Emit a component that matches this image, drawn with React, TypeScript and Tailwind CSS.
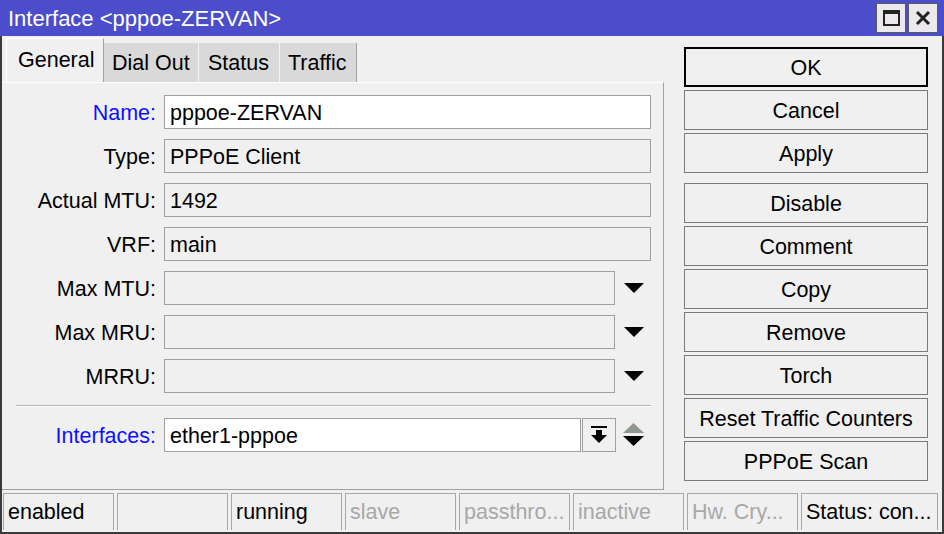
import React from "react";

const font = { fontFamily: '"Liberation Sans", Arial, sans-serif' };

function Field({ value, white, width }: { value: string; white?: boolean; width: string }) {
  return (
    <div
      className={`h-[34px] ${width} border border-[#a0a0a0] ${white ? "bg-white" : "bg-[#f0f0f0]"} flex items-center pl-[5px] pt-[3px] text-black`}
    >
      {value}
    </div>
  );
}

function DownTri() {
  return (
    <svg width="20" height="10" viewBox="0 0 20 10" className="ml-[9px]">
      <polygon points="0,0 20,0 10,10" fill="#000" />
    </svg>
  );
}

function Row({ label, blue, children }: { label: string; blue?: boolean; children: React.ReactNode }) {
  return (
    <div className="flex items-center h-[34px]">
      <div className={`w-[154px] pt-[3px] text-right whitespace-nowrap ${blue ? "text-[#1010ff]" : "text-black"}`}>{label}</div>
      <div className="ml-[8px] flex items-center">{children}</div>
    </div>
  );
}

function Btn({ label, primary }: { label: string; primary?: boolean }) {
  return (
    <div
      className={`h-[40px] flex items-center justify-center pt-[3px] bg-[#f0f0f0] text-black ${
        primary ? "border-2 border-black" : "border border-[#7a7a7a]"
      }`}
    >
      {label}
    </div>
  );
}

function Cell({ text, w, dim }: { text: string; w: string; dim?: boolean }) {
  return (
    <div
      className={`${w} h-[37px] border border-b-0 border-[#a8a8a8] pl-[4px] pt-[2px] flex items-center whitespace-nowrap overflow-hidden ${
        dim ? "text-[#a8a8a8]" : "text-black"
      }`}
    >
      {text}
    </div>
  );
}

export default function App() {
  return (
    <div className="w-[944px] h-[534px] bg-[#f0f0f0] text-[21.5px] leading-none select-none" style={font}>
      {/* title bar */}
      <div className="h-[36px] bg-[#4b4dcb] flex items-center justify-between pl-[8px] pr-[6px]">
        <span className="text-white text-[22px] pt-[2px]">Interface &lt;pppoe-ZERVAN&gt;</span>
        <div className="flex gap-[2px]">
          <div className="w-[30px] h-[30px] bg-[#ece9ec] border border-[#5a5a5a] flex items-center justify-center">
            <svg width="17" height="16" viewBox="0 0 17 16">
              <rect x="1" y="1" width="15" height="14" fill="none" stroke="#222" strokeWidth="2" />
              <rect x="1" y="1" width="15" height="3" fill="#222" />
            </svg>
          </div>
          <div className="w-[30px] h-[30px] bg-[#ece9ec] border border-[#5a5a5a] flex items-center justify-center">
            <svg width="16" height="16" viewBox="0 0 16 16">
              <path d="M2 2 L14 14 M14 2 L2 14" stroke="#222" strokeWidth="3" />
            </svg>
          </div>
        </div>
      </div>

      <div className="h-[498px] border-x-2 border-b-2 border-[#3a3a3a] flex flex-col">
        <div className="h-[454px] flex">
          {/* left column */}
          <div className="w-[662px] flex flex-col">
            <div className="h-[46px] flex items-end pl-[4px]">
              <div className="h-[44px] w-[98px] border-t border-l border-white border-r border-r-[#a0a0a0] bg-[#f0f0f0] flex items-center pl-[11px] pt-[1px]">
                General
              </div>
              <div className="h-[39px] w-[95px] bg-[#d9d9d9] border-r border-[#f4f4f4] flex items-center pl-[8px] pt-[3px]">Dial Out</div>
              <div className="h-[39px] w-[81px] bg-[#d9d9d9] border-r border-[#f4f4f4] flex items-center pl-[9px] pt-[3px]">Status</div>
              <div className="h-[39px] w-[77px] bg-[#d9d9d9] border-r border-[#a0a0a0] flex items-center pl-[8px] pt-[3px]">Traffic</div>
            </div>
            <div className="h-[408px] border-t border-t-white border-r border-b border-[#a0a0a0] pt-[12px] flex flex-col">
              <div className="flex flex-col gap-[10px]">
                <Row label="Name:" blue>
                  <Field value="pppoe-ZERVAN" white width="w-[487px]" />
                </Row>
                <Row label="Type:">
                  <Field value="PPPoE Client" width="w-[487px]" />
                </Row>
                <Row label="Actual MTU:">
                  <Field value="1492" width="w-[487px]" />
                </Row>
                <Row label="VRF:">
                  <Field value="main" width="w-[487px]" />
                </Row>
                <Row label="Max MTU:">
                  <Field value="" width="w-[451px]" />
                  <DownTri />
                </Row>
                <Row label="Max MRU:">
                  <Field value="" width="w-[451px]" />
                  <DownTri />
                </Row>
                <Row label="MRRU:">
                  <Field value="" width="w-[451px]" />
                  <DownTri />
                </Row>
              </div>
              <div className="mt-[12px] ml-[14px] w-[635px] border-t border-[#b4b4b4] border-b border-b-white" />
              <div className="mt-[11px]">
                <Row label="Interfaces:" blue>
                  <Field value="ether1-pppoe" white width="w-[417px]" />
                  <div className="ml-[1px] w-[34px] h-[34px] border border-[#a0a0a0] bg-[#f0f0f0] flex items-center justify-center">
                    <svg width="16" height="18" viewBox="0 0 16 18">
                      <rect x="0" y="0" width="16" height="2" fill="#000" />
                      <rect x="5" y="4" width="6" height="6" fill="#000" />
                      <polygon points="0,9 16,9 8,17" fill="#000" />
                    </svg>
                  </div>
                  <svg width="21" height="24" viewBox="0 0 21 24" className="ml-[7px]">
                    <polygon points="0,10 21,10 10.5,0" fill="#8e988e" />
                    <polygon points="0,13 21,13 10.5,23" fill="#000" />
                  </svg>
                </Row>
              </div>
            </div>
          </div>

          {/* right column */}
          <div className="ml-[20px] w-[244px] pt-[11px] flex flex-col gap-[3px]">
            <Btn label="OK" primary />
            <Btn label="Cancel" />
            <Btn label="Apply" />
            <div className="h-[4px]" />
            <Btn label="Disable" />
            <Btn label="Comment" />
            <Btn label="Copy" />
            <Btn label="Remove" />
            <Btn label="Torch" />
            <Btn label="Reset Traffic Counters" />
            <Btn label="PPPoE Scan" />
          </div>
        </div>

        {/* status bar */}
        <div className="h-[42px] pt-[3px] pl-[1px] flex gap-[3px]">
          <Cell text="enabled" w="w-[111px]" />
          <Cell text="" w="w-[111px]" />
          <Cell text="running" w="w-[111px]" />
          <Cell text="slave" w="w-[111px]" dim />
          <Cell text="passthro..." w="w-[111px]" dim />
          <Cell text="inactive" w="w-[111px]" dim />
          <Cell text="Hw. Cry..." w="w-[111px]" dim />
          <Cell text="Status: con..." w="w-[137px]" />
        </div>
      </div>
    </div>
  );
}
